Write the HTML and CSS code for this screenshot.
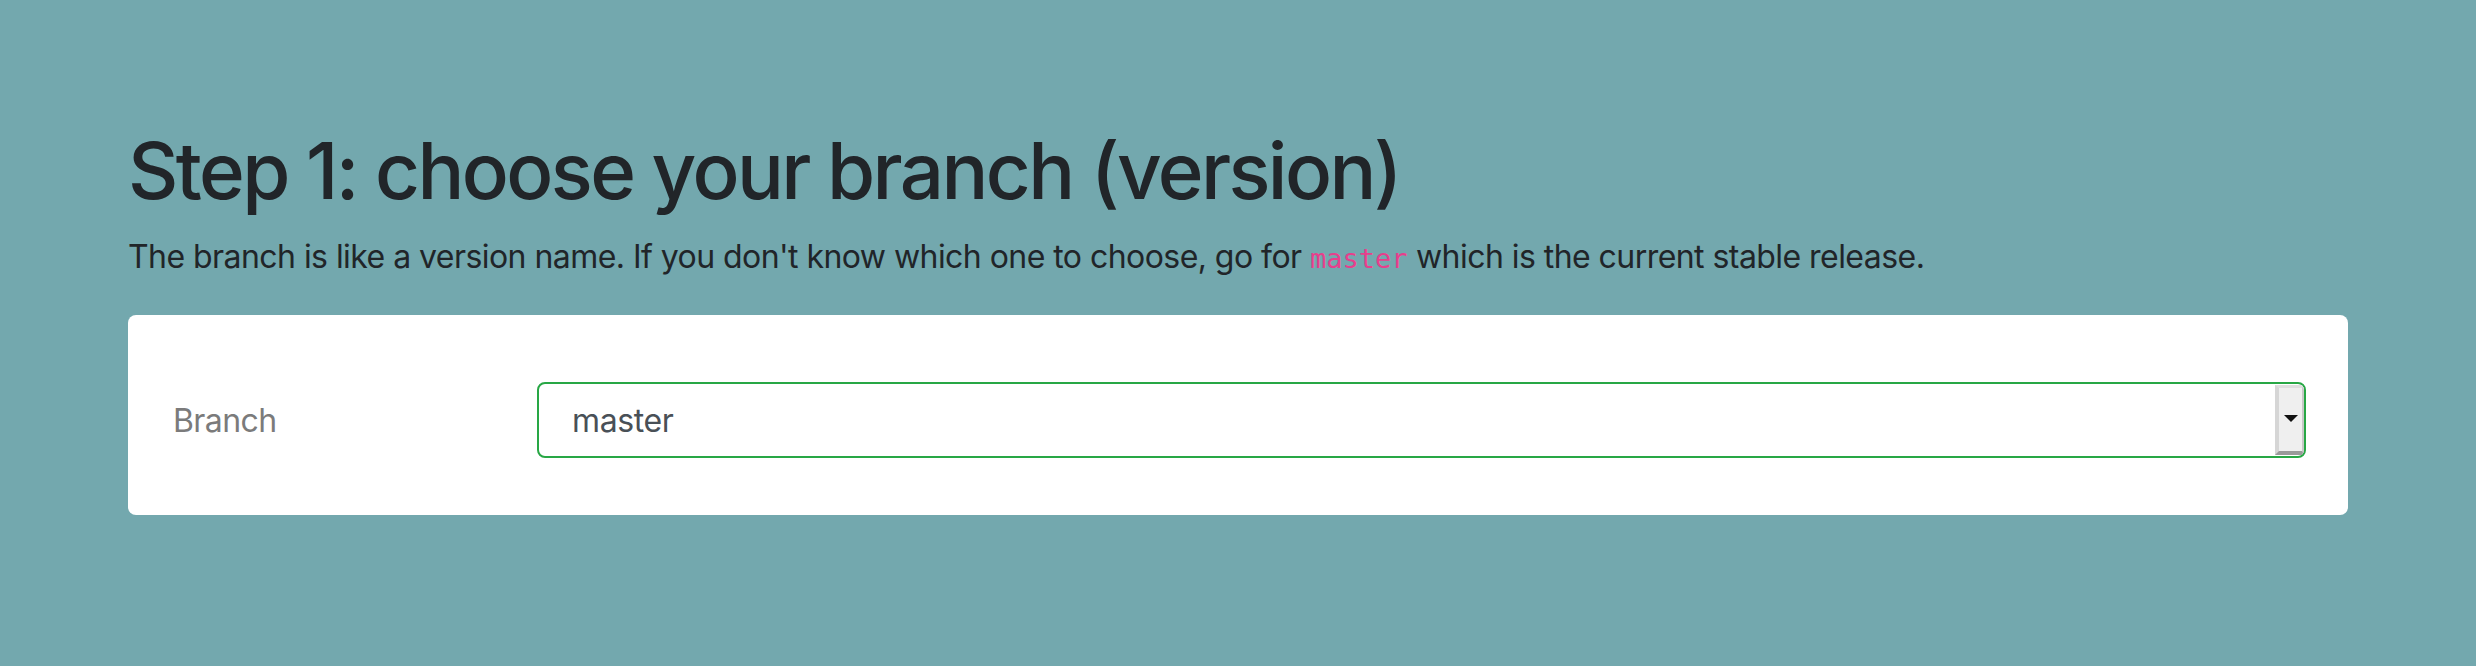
FILE: index.html
```html
<!DOCTYPE html>
<html lang="en">
<head>
<meta charset="utf-8">
<title>Step 1: choose your branch</title>
<link rel="stylesheet" href="styles.css">
</head>
<body>
<main class="container">
  <h1 class="title">Step 1: choose your branch (version)</h1>
  <p class="lead">The branch is like a version name. If you don't know which one to choose, go for <code class="code">master</code> which is the current stable release.</p>
  <section class="card">
    <div class="form-row">
      <label class="form-label">Branch</label>
      <div class="select">
        <span class="select-value">master</span>
        <span class="select-btn"><span class="select-arrow"></span></span>
      </div>
    </div>
  </section>
</main>
</body>
</html>
```
FILE: styles.css
```css
html, body {
  margin: 0;
  padding: 0;
}
body {
  background: #73a8ae;
  font-family: Inter, "Liberation Sans", Arial, sans-serif;
  color: #212529;
  width: 2476px;
  height: 666px;
}
.container {
  padding: 123px 128px 0 128px;
}
.title {
  margin: 0 0 14px 0;
  font-size: 78px;
  line-height: 96px;
  font-weight: 500;
  letter-spacing: -2.6px;
  color: #212529;
}
.lead {
  margin: 0 0 32px 0;
  font-size: 32px;
  line-height: 48px;
  letter-spacing: -0.55px;
  color: #212529;
}
.code {
  font-family: "DejaVu Sans Mono", "Liberation Mono", monospace;
  font-size: 27px;
  letter-spacing: 0;
  color: #e83e8c;
}
.card {
  background: #ffffff;
  border-radius: 8px;
  height: 200px;
  box-sizing: border-box;
  padding: 67px 42px 57px 45px;
}
.form-row {
  display: flex;
  align-items: center;
}
.form-label {
  width: 364px;
  font-size: 32px;
  letter-spacing: -0.6px;
  color: #7b7b7b;
}
.select {
  flex: 1;
  height: 76px;
  box-sizing: border-box;
  border: 2px solid #28a745;
  border-radius: 8px;
  display: flex;
  align-items: stretch;
  overflow: hidden;
}
.select-value {
  flex: 1;
  display: flex;
  align-items: center;
  padding-left: 33px;
  font-size: 32px;
  letter-spacing: -0.4px;
  color: #495057;
}
.select-btn {
  width: 29px;
  margin: 1px 0 1px 0;
  box-sizing: border-box;
  background: #efefef;
  border-left: 4px solid #d6d6d6;
  border-top: 3px solid #dedede;
  border-bottom: 4px solid #9a9a9a;
  border-right: 2px solid #c8c8c8;
  display: flex;
  align-items: center;
  justify-content: center;
}
.select-arrow {
  width: 0;
  height: 0;
  border-left: 7px solid transparent;
  border-right: 7px solid transparent;
  border-top: 7px solid #111;
  margin-top: -2px;
}
```
